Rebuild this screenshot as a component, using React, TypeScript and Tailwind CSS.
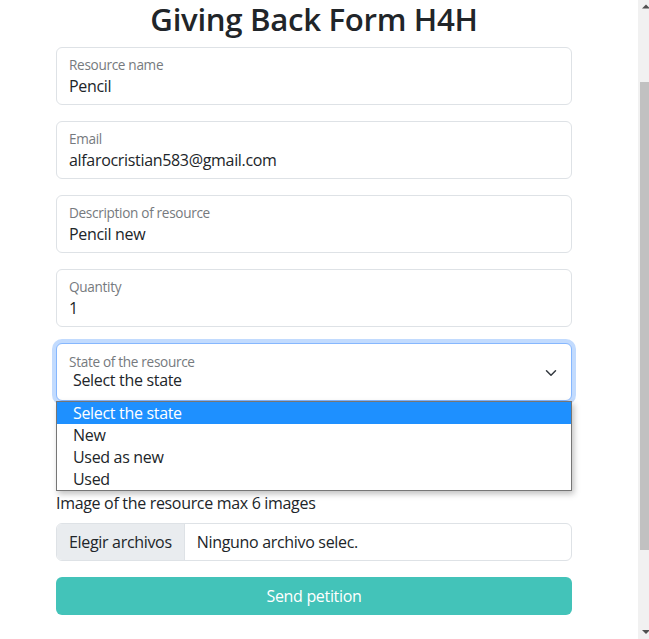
import React from "react";

const font = { fontFamily: '"Open Sans", "Noto Sans", sans-serif' };

interface FieldProps {
    label: string;
    value: string;
}

const FloatingField: React.FC<FieldProps> = ({ label, value }) => {
    return (
        <div className="mb-4 h-[58px] rounded-md border border-[#dee2e6] bg-white px-3 pt-[7px]">
            <div className="h-[19px] text-[13.6px] leading-[19px] text-[#767a7e]">{label}</div>
            <div className="h-[24px] text-[16px] leading-[24px] text-[#212529]">{value}</div>
        </div>
    );
};

const options = ["Select the state", "New", "Used as new", "Used"];

const Scrollbar: React.FC = () => {
    return (
        <div className="flex h-full w-[11px] shrink-0 flex-col bg-[#f1f1f1]">
            {/* flecha arriba */}
            <svg width="11" height="17" viewBox="0 0 11 17" className="shrink-0">
                <polygon points="4,8.5 8,4.5 12,8.5" fill="#505050" />
            </svg>
            <div className="ml-[2px] mt-[65px] h-[468px] bg-[#c1c1c1]"></div>
            <div className="flex-1"></div>
            {/* flecha abajo */}
            <svg width="11" height="13" viewBox="0 0 11 13" className="shrink-0">
                <polygon points="4,4 12,4 8,8" fill="#505050" />
            </svg>
        </div>
    );
};

export default function App() {
    return (
        <div className="flex h-[639px] w-full overflow-hidden bg-white tracking-[-0.02em]" style={font}>
            <div className="flex-1">
                <div className="ml-[56px] w-[516px]">
                    <h1 className="mb-[9px] text-center text-[31.2px] font-semibold leading-[38px] text-[#212529]">
                        Giving Back Form H4H
                    </h1>

                    <FloatingField label="Resource name" value="Pencil" />
                    <FloatingField label="Email" value="alfarocristian583@gmail.com" />
                    <FloatingField label="Description of resource" value="Pencil new" />
                    <FloatingField label="Quantity" value="1" />

                    {/* Select abierto */}
                    <div className="relative mb-4">
                        <div className="flex h-[58px] items-center rounded-md border border-[#86b7fe] bg-white pl-3 pr-3 shadow-[0_0_0_4px_rgba(13,110,253,0.25)]">
                            <div className="flex-1">
                                <div className="text-[13.6px] leading-[19px] text-[#767a7e]">State of the resource</div>
                                <div className="-mt-[3px] pl-[4px] text-[16px] leading-[24px] text-[#212529]">Select the state</div>
                            </div>
                            <svg width="16" height="12" viewBox="0 0 16 16" className="mt-[1px]">
                                <path d="m2 5 6 6 6-6" fill="none" stroke="#343a40" strokeWidth="2" strokeLinecap="round" strokeLinejoin="round" />
                            </svg>
                        </div>
                        <ul className="absolute left-0 top-[58px] z-10 w-full border border-[#767676] bg-white shadow-[2px_3px_6px_rgba(0,0,0,0.25)]">
                            {options.map((opt, i) => (
                                <li
                                    key={opt}
                                    className={
                                        i === 0
                                            ? "h-[22px] bg-[#1e90ff] pl-4 text-[16px] leading-[22px] text-white"
                                            : "h-[22px] pl-4 text-[16px] leading-[22px] text-[#212529]"
                                    }
                                >
                                    {opt}
                                </li>
                            ))}
                        </ul>
                    </div>

                    {/* campo tapado por la lista */}
                    <FloatingField label="" value="" />

                    <div className="mb-2 text-[16px] leading-[24px] text-[#212529]">Image of the resource max 6 images</div>
                    <div className="mb-4 flex h-[38px] overflow-hidden rounded-md border border-[#dee2e6] text-[16px] text-[#212529]">
                        <div className="flex items-center border-r border-[#dee2e6] bg-[#e9ecef] px-3">Elegir archivos</div>
                        <div className="flex items-center px-3">Ninguno archivo selec.</div>
                    </div>

                    <button className="h-[38px] w-full rounded-md bg-[#43c3b9] text-[16px] text-white">Send petition</button>
                </div>
            </div>
            <Scrollbar />
        </div>
    );
}
